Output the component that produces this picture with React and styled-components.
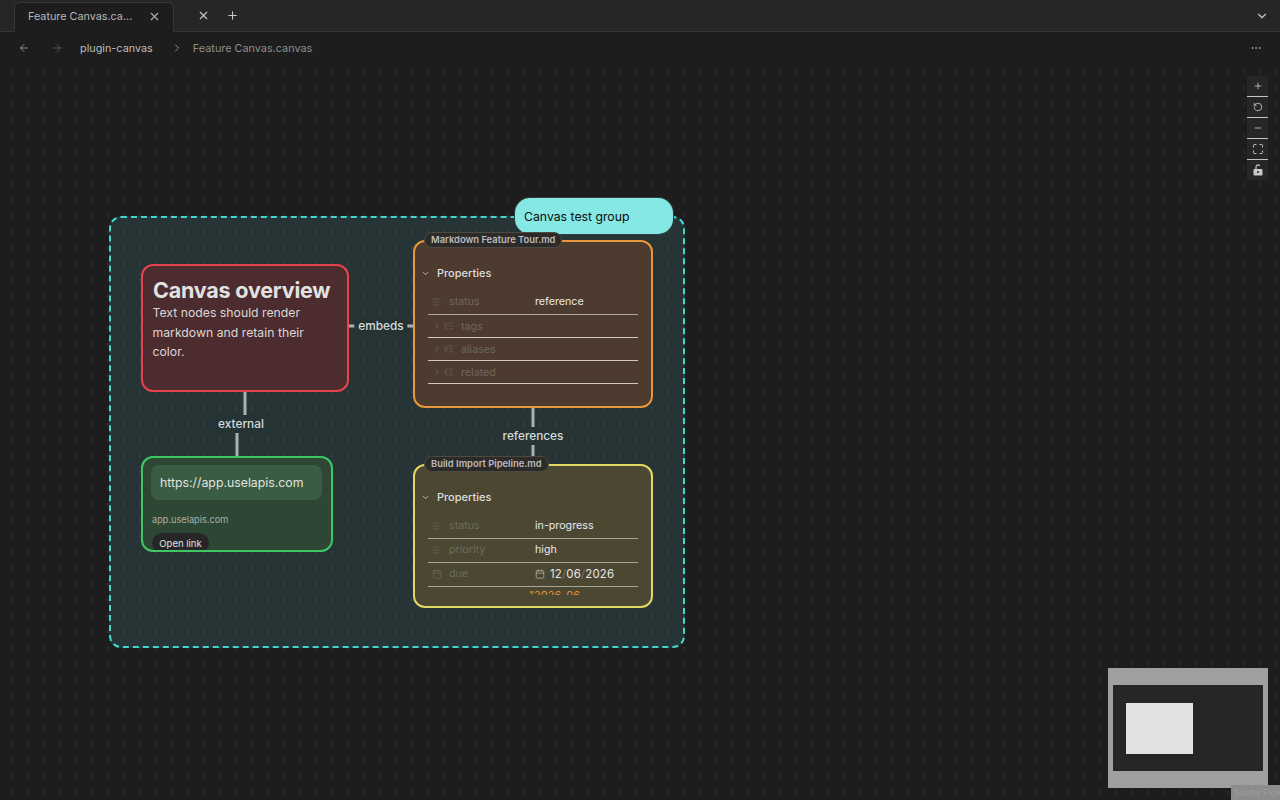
import React from "react";
import styled, { createGlobalStyle } from "styled-components";
import {
  ArrowLeft,
  ArrowRight,
  X,
  Plus,
  Minus,
  ChevronDown,
  ChevronRight,
  MoreHorizontal,
  AlignLeft,
  ListTree,
  Calendar,
  RotateCcw,
  Maximize,
} from "lucide-react";

const GlobalStyle = createGlobalStyle`
  html, body {
    margin: 0;
    height: 100%;
    background: #1d1d1d;
    font-family: Inter, "Liberation Sans", sans-serif;
    overflow: hidden;
  }
  #root { height: 100%; }
  * { box-sizing: border-box; }
`;

const Page = styled.div`
  display: flex;
  flex-direction: column;
  height: 800px;
`;

const TabBar = styled.div`
  display: flex;
  align-items: flex-end;
  height: 32px;
  padding-left: 14px;
  background: #262626;
  border-bottom: 1px solid #363636;
`;

const Tab = styled.div`
  display: flex;
  align-items: center;
  justify-content: space-between;
  width: 160px;
  height: 30px;
  margin-bottom: -1px;
  padding: 0 12px 3px 13px;
  background: #1d1d1d;
  border: 1px solid #363636;
  border-bottom: none;
  border-radius: 6px 6px 0 0;
  color: #b8b8b8;
  font-size: 10.8px;
`;

const TabButton = styled.div`
  display: flex;
  align-items: center;
  justify-content: center;
  width: 14px;
  height: 31px;
  margin-left: ${(p) => p.$gap}px;
  margin-right: ${(p) => p.$end || 0}px;
  color: #c8c8c8;
`;

const Spacer = styled.div`
  flex: 1;
`;

const NavBar = styled.div`
  display: flex;
  align-items: center;
  height: 32px;
  padding: 0 18px;
  background: #1d1d1d;
  font-size: 10.85px;
`;

const NavIcon = styled.div`
  display: flex;
  width: 12px;
  margin-right: ${(p) => p.$gap}px;
  color: ${(p) => p.$color};
`;

const Crumb = styled.span`
  color: ${(p) => p.$color};
  margin-right: ${(p) => p.$gap}px;
`;

const Canvas = styled.div`
  position: relative;
  flex: 1;
  overflow: hidden;
  background-color: #1d1d1d;
  background-image: radial-gradient(circle, #2f2f2f 0.7px, transparent 1px);
  background-size: 16px 16px;
  background-position: 4px 0;
`;

const EdgeLayer = styled.svg`
  position: absolute;
  inset: 0;
  width: 100%;
  height: 100%;
`;

const Group = styled.div`
  position: absolute;
  left: 109px;
  top: 152px;
  width: 576px;
  height: 432px;
  background: rgba(103, 220, 228, 0.12);
  border: 2px dashed #41d6d0;
  border-radius: 12px;
`;

const GroupLabel = styled.div`
  position: absolute;
  left: 515px;
  top: 134px;
  display: flex;
  align-items: center;
  width: 158px;
  height: 36px;
  padding-left: 9px;
  background: #86e8e4;
  border-radius: 15px;
  box-shadow: 0 0 0 1px #2a3f3f;
  color: #0c0c0c;
  font-size: 12.25px;
`;

const Node = styled.div`
  position: absolute;
  left: ${(p) => p.$x}px;
  top: ${(p) => p.$y}px;
  width: ${(p) => p.$w}px;
  height: ${(p) => p.$h}px;
  background: ${(p) => p.$bg};
  border: 2px solid ${(p) => p.$border};
  border-radius: 12px;
`;

const TextBody = styled.div`
  padding: 10px 10px;
  color: #dcd6d6;
  font-size: 12.25px;
  line-height: 19.5px;
`;

const Title = styled.h1`
  margin: 1px 0 0;
  color: #e2e2e2;
  font-size: 21.5px;
  font-weight: 700;
  line-height: 26px;
  letter-spacing: -0.2px;
`;

const Paragraph = styled.p`
  margin: 0 0 0 -0.5px;
`;

const LinkNode = styled(Node)`
  overflow: hidden;
`;

const LinkUrl = styled.div`
  display: flex;
  align-items: center;
  height: 35px;
  margin: 7px 9px 0 8px;
  padding-left: 9px;
  background: #3a5c42;
  border-radius: 8px;
  color: #e0e4e0;
  font-size: 12.3px;
`;

const LinkHost = styled.div`
  margin: 14px 0 0 9px;
  color: #a8b0a8;
  font-size: 9.2px;
  line-height: 12px;
`;

const OpenLink = styled.div`
  display: inline-flex;
  align-items: center;
  justify-content: center;
  width: 57px;
  height: 20px;
  margin: 7px 0 0 9px;
  background: #262626;
  border-radius: 10px;
  color: #e0e0e0;
  font-size: 9.5px;
`;

const FileTag = styled.div`
  position: absolute;
  left: 9px;
  top: -10px;
  height: 16px;
  padding: 0 6px;
  background: #2d2b29;
  border: 1px solid #4c4a3e;
  border-radius: 8px;
  color: #bdbdbd;
  font-size: 9.4px;
  font-weight: 600;
  line-height: 14.5px;
  white-space: nowrap;
`;

const PropsHeader = styled.div`
  display: flex;
  align-items: center;
  gap: 7px;
  height: 16px;
  margin: 23px 0 10px 6px;
  color: #dedede;
  font-size: 11px;
  font-weight: 500;
`;

const PropsList = styled.div`
  height: ${(p) => p.$h}px;
  margin: 0 13px;
  overflow: hidden;
`;

const Row = styled.div`
  display: flex;
  align-items: center;
  height: ${(p) => p.$h}px;
  padding-bottom: ${(p) => p.$lift}px;
  border-bottom: 1px solid ${(p) => p.$line};
  font-size: 10.7px;
`;

const RowKey = styled.div`
  display: flex;
  align-items: center;
  gap: 7px;
  width: 107px;
  padding-left: 4px;
  color: ${(p) => p.$color};
`;

const RowValue = styled.div`
  display: flex;
  align-items: center;
  gap: 5px;
  color: #e8e8e8;
`;

const DatePart = styled.span`
  font-size: 11.4px;
  letter-spacing: 0.2px;
`;

const DateSlash = styled.span`
  color: #77735c;
`;

const Overflow = styled.div`
  margin-left: 101px;
  margin-top: 2px;
  color: #e0913a;
  font-size: 11px;
  line-height: 12px;
`;

const EdgeLabel = styled.div`
  position: absolute;
  left: ${(p) => p.$x}px;
  top: ${(p) => p.$y}px;
  transform: translate(-50%, -50%);
  padding: 2px 4px;
  background: #253334;
  color: #d4dcdc;
  font-size: 11.8px;
  font-weight: 500;
  line-height: 14px;
`;

const Controls = styled.div`
  position: absolute;
  right: 12px;
  top: 12px;
  display: flex;
  flex-direction: column;
  width: 21px;
`;

const ControlButton = styled.div`
  display: flex;
  align-items: center;
  justify-content: center;
  height: ${(p) => (p.$last ? 20 : 21)}px;
  background: #262626;
  border-bottom: ${(p) => (p.$last ? "none" : "1px solid #c4c4c4")};
  color: #c8c8c8;
`;

const MiniMap = styled.svg`
  position: absolute;
  right: 12px;
  bottom: 12px;
  width: 160px;
  height: 120px;
`;

const Attribution = styled.div`
  position: absolute;
  right: 0;
  bottom: 0;
  width: 49px;
  height: 15px;
  padding-left: 3px;
  background: #8c8c8c;
  color: #9c9c9c;
  font-size: 9px;
  line-height: 15px;
  white-space: nowrap;
  overflow: hidden;
`;

const UnlockIcon = () => (
  <svg width="10" height="12" viewBox="0 0 10 12" fill="none">
    <path d="M3 5V3a2 2 0 0 1 3.6-1.2" stroke="currentColor" strokeWidth="1.2" />
    <path
      fillRule="evenodd"
      clipRule="evenodd"
      d="M1.5 5h7a1 1 0 0 1 1 1v4.5a1 1 0 0 1-1 1h-7a1 1 0 0 1-1-1V6a1 1 0 0 1 1-1zM5 7a1 1 0 1 0 0 2 1 1 0 0 0 0-2z"
      fill="currentColor"
    />
  </svg>
);

const Properties = () => (
  <PropsHeader>
    <ChevronDown size={9} />
    Properties
  </PropsHeader>
);

const TextProp = ({ name, color, line, value }) => (
  <Row $h={24} $line={line} $lift={2}>
    <RowKey $color={color}>
      <AlignLeft size={10} strokeWidth={1.6} />
      {name}
    </RowKey>
    <RowValue>{value}</RowValue>
  </Row>
);

const ListProp = ({ name, color }) => (
  <Row $h={23} $line="#cfc8c0" $lift={0}>
    <RowKey $color={color}>
      <ChevronRight size={10} style={{ marginRight: -5 }} />
      <ListTree size={10} strokeWidth={1.6} />
      {name}
    </RowKey>
  </Row>
);

export default function App() {
  const dimBrown = "#6e675e";
  const dimOlive = "#6e6c58";
  const oliveLine = "#a8a594";

  return (
    <Page>
      <GlobalStyle />
      <TabBar>
        <Tab>
          Feature Canvas.ca...
          <X size={13} color="#b0b0b0" />
        </Tab>
        <TabButton $gap={22}>
          <X size={13} />
        </TabButton>
        <TabButton $gap={15}>
          <Plus size={13} />
        </TabButton>
        <Spacer />
        <TabButton $gap={0} $end={11}>
          <ChevronDown size={14} />
        </TabButton>
      </TabBar>

      <NavBar>
        <NavIcon $gap={21} $color="#8c8c8c">
          <ArrowLeft size={12} />
        </NavIcon>
        <NavIcon $gap={17} $color="#585858">
          <ArrowRight size={12} />
        </NavIcon>
        <Crumb $color="#bcbcbc" $gap={18}>
          plugin-canvas
        </Crumb>
        <NavIcon $gap={10} $color="#8c8c8c">
          <ChevronRight size={12} />
        </NavIcon>
        <Crumb $color="#8e8e8e" $gap={0}>
          Feature Canvas.canvas
        </Crumb>
        <Spacer />
        <NavIcon $gap={0} $color="#9c9c9c">
          <MoreHorizontal size={12} />
        </NavIcon>
      </NavBar>

      <Canvas>
        <Group />
        <EdgeLayer>
          <g fill="none" stroke="#a6b2b2" strokeWidth="3">
            <path d="M349 262 H413" />
            <path d="M245 328 V360 H237 V392" />
            <path d="M533 344 V400" />
          </g>
        </EdgeLayer>
        <EdgeLabel $x={381} $y={262}>embeds</EdgeLabel>
        <EdgeLabel $x={241} $y={360}>external</EdgeLabel>
        <EdgeLabel $x={533} $y={372}>references</EdgeLabel>

        <GroupLabel>Canvas test group</GroupLabel>

        <Node $x={141} $y={200} $w={208} $h={128} $bg="#4c2c2e" $border="#e8434c">
          <TextBody>
            <Title>Canvas overview</Title>
            <Paragraph>Text nodes should render markdown and retain their color.</Paragraph>
          </TextBody>
        </Node>

        <Node $x={413} $y={176} $w={240} $h={168} $bg="#4c3b2e" $border="#e8963a">
          <FileTag>Markdown Feature Tour.md</FileTag>
          <Properties />
          <PropsList $h={94}>
            <TextProp name="status" color={dimBrown} line="#b0a89e" value="reference" />
            <ListProp name="tags" color={dimBrown} />
            <ListProp name="aliases" color={dimBrown} />
            <ListProp name="related" color={dimBrown} />
          </PropsList>
        </Node>

        <LinkNode $x={141} $y={392} $w={192} $h={96} $bg="#2e4735" $border="#3ec864">
          <LinkUrl>https://app.uselapis.com</LinkUrl>
          <LinkHost>app.uselapis.com</LinkHost>
          <OpenLink>Open link</OpenLink>
        </LinkNode>

        <Node $x={413} $y={400} $w={240} $h={144} $bg="#4b4733" $border="#e0d860">
          <FileTag>Build Import Pipeline.md</FileTag>
          <Properties />
          <PropsList $h={80}>
            <TextProp name="status" color={dimOlive} line={oliveLine} value="in-progress" />
            <TextProp name="priority" color={dimOlive} line={oliveLine} value="high" />
            <Row $h={24} $line={oliveLine} $lift={2}>
              <RowKey $color={dimOlive}>
                <Calendar size={10} strokeWidth={1.6} />
                due
              </RowKey>
              <RowValue>
                <Calendar size={10} color="#aaa89a" />
                <DatePart>
                  12<DateSlash>/</DateSlash>06<DateSlash>/</DateSlash>2026
                </DatePart>
              </RowValue>
            </Row>
            <Overflow>"2026-06</Overflow>
          </PropsList>
        </Node>

        <Controls>
          <ControlButton><Plus size={10} /></ControlButton>
          <ControlButton><RotateCcw size={10} /></ControlButton>
          <ControlButton><Minus size={10} /></ControlButton>
          <ControlButton><Maximize size={12} /></ControlButton>
          <ControlButton $last><UnlockIcon /></ControlButton>
        </Controls>

        <MiniMap viewBox="0 0 160 120">
          <rect width="160" height="120" fill="#9f9f9f" />
          <rect x="5" y="17" width="150" height="86" fill="#262626" />
          <rect x="18" y="35" width="67" height="51" fill="#e2e2e2" />
        </MiniMap>
        <Attribution>Svelte Flow</Attribution>
      </Canvas>
    </Page>
  );
}
